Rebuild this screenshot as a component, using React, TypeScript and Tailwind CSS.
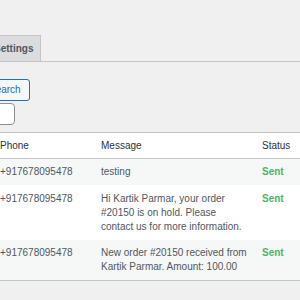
export default function App() {
  const rows = [
    { phone: "+917678095478", msg: ["testing"], pad: "pt-[6px] pb-[6px]", bg: "bg-[#f6f7f7]" },
    {
      phone: "+917678095478",
      msg: ["Hi Kartik Parmar, your order", "#20150 is on hold. Please", "contact us for more information."],
      pad: "pt-[7px] pb-[6px]",
      bg: "bg-white",
    },
    {
      phone: "+917678095478",
      msg: ["New order #20150 received from", "Kartik Parmar. Amount: 100.00"],
      pad: "pt-[6px] pb-[6px]",
      bg: "bg-[#f6f7f7]",
    },
  ];
  return (
    <div
      className="w-[300px] h-[300px] overflow-hidden bg-[#f0f0f1] text-[10px] leading-[14px] text-[#50575e]"
      style={{ fontFamily: '"Liberation Sans", Arial, sans-serif' }}
    >
      <div className="pt-[35px] border-b border-[#c3c4c7] flex">
        <div className="-ml-[14px] h-[26px] px-[7px] border-t border-l border-r border-[#c3c4c7] bg-[#dcdcde] font-bold text-[#50575e] flex items-center">
          Settings
        </div>
      </div>
      <div className="mt-[17px] flex">
        <button className="-ml-[20px] h-[22px] pl-[8px] pr-[8px] border border-[#2271b1] rounded-[3px] bg-[#f6f7f7] text-[#2271b1] flex items-center">
          Search
        </button>
      </div>
      <div className="mt-[2px] flex">
        <div className="-ml-[20px] w-[35px] h-[22px] border border-[#8c8f94] rounded-[4px] bg-white" />
      </div>
      <div className="mt-[7px] border-t border-b border-[#c3c4c7] bg-white w-[320px]">
        <div className="grid grid-cols-[93px_161px_1fr] text-[#2c3338] border-b border-[#c3c4c7] pt-[6px] pb-[5px]">
          <div>Phone</div>
          <div className="pl-2">Message</div>
          <div className="pl-2">Status</div>
        </div>
        {rows.map((r, i) => (
          <div key={i} className={`grid grid-cols-[93px_161px_1fr] ${r.bg} ${r.pad}`}>
            <div>{r.phone}</div>
            <div className="pl-2 whitespace-nowrap">
              {r.msg.map((m, j) => (
                <div key={j}>{m}</div>
              ))}
            </div>
            <div className="pl-2 font-bold text-[#4ab866]">Sent</div>
          </div>
        ))}
      </div>
    </div>
  );
}
